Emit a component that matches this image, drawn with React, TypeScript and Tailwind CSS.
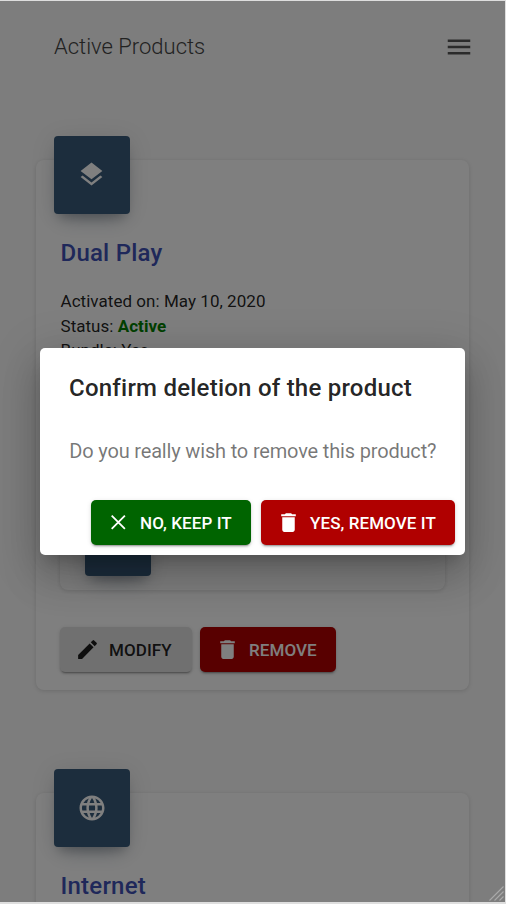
import type { ReactNode } from "react";
import { MdMenu, MdLayers, MdLanguage, MdDelete, MdEdit } from "react-icons/md";

const buttonShadow =
  "shadow-[0_3px_1px_-2px_rgba(0,0,0,0.2),0_2px_2px_0_rgba(0,0,0,0.14),0_1px_5px_0_rgba(0,0,0,0.12)]";

function CrossIcon() {
  return (
    <svg width="25" height="25" viewBox="0 0 25 25" fill="none" stroke="currentColor" strokeWidth="1.8">
      <path d="M5.7 5.7 18.9 18.9M18.9 5.7 5.7 18.9" />
    </svg>
  );
}

function ActionButton({
  icon,
  label,
  className,
  labelClassName = "pt-[2px]",
}: {
  icon: ReactNode;
  label: string;
  className: string;
  labelClassName?: string;
}) {
  return (
    <button
      className={`flex h-[45px] shrink-0 items-center gap-[9px] whitespace-nowrap rounded-[5px] pl-[15px] text-[17px] font-medium uppercase tracking-[0.08px] ${buttonShadow} ${className}`}
    >
      {icon}
      <span className={labelClassName}>{label}</span>
    </button>
  );
}

function IconTile({ children, className }: { children?: ReactNode; className: string }) {
  return (
    <div
      className={`flex items-center justify-center rounded-[4px] bg-[#385a7a] text-white shadow-[0_12px_20px_-10px_rgba(56,90,122,0.35),0_4px_25px_0_rgba(0,0,0,0.12),0_8px_10px_-5px_rgba(0,0,0,0.2)] ${className}`}
    >
      {children}
    </div>
  );
}

function ProductCard({ icon, title, children }: { icon: ReactNode; title: string; children?: ReactNode }) {
  return (
    <section className="h-[530px] w-[433px] rounded-[8px] bg-white px-[24px] shadow-[0_1px_4px_0_rgba(0,0,0,0.14)]">
      <IconTile className="-ml-[6px] -mt-[24px] h-[78px] w-[76px] pb-px pr-px">{icon}</IconTile>
      <h2 className="mt-[23px] pl-[0.5px] text-[24px] font-medium leading-[32px] tracking-[0.22px] text-[#3f51b5]">
        {title}
      </h2>
      {children}
    </section>
  );
}

function ConfirmDialog() {
  return (
    <div className="absolute inset-0 bg-black/50 pl-[40px] pt-[347px]">
      <div
        role="dialog"
        className="h-[207px] w-[425px] rounded-[5px] bg-white pr-[10px] pt-[24px] shadow-[0_11px_15px_-7px_rgba(0,0,0,0.2),0_24px_38px_3px_rgba(0,0,0,0.14),0_9px_46px_8px_rgba(0,0,0,0.12)]"
      >
        <h2 className="whitespace-nowrap pl-[29px] text-[24px] font-medium leading-[32px] tracking-[0.23px] text-black/87">
          Confirm deletion of the product
        </h2>
        <p className="mt-[32px] whitespace-nowrap pl-[29.3px] text-[20px] leading-[30px] tracking-[-0.17px] text-black/54">
          Do you really wish to remove this product?
        </p>
        <div className="mt-[34px] flex justify-end gap-[10px]">
          <ActionButton icon={<CrossIcon />} label="No, keep it" className="w-[160px] bg-[#006400] text-white" />
          <ActionButton icon={<MdDelete size={25} />} label="Yes, remove it" className="w-[194px] bg-[#b00000] text-white" />
        </div>
      </div>
    </div>
  );
}

export default function App() {
  return (
    <div className="h-[904px] w-[506px] overflow-hidden bg-[#dedede] pb-[2px] pr-px pt-px font-['Roboto',sans-serif]">
      <main className="relative h-[901px] overflow-hidden bg-[#fafafa] text-black/87">
        <header className="flex h-[90px] items-center justify-between pl-[54px] pr-[31px]">
          <h1 className="text-[22px] font-light text-[#444444]">Active Products</h1>
          <MdMenu size={30} className="mt-px text-black/65" />
        </header>

        <div className="flex flex-col gap-[103px] pl-[36px] pt-[69px]">
          <ProductCard icon={<MdLayers size={29} />} title="Dual Play">
            <div className="mt-[20px] pl-[0.5px] text-[17px] leading-[24.5px] tracking-[0.04px]">
              <p>Activated on: May 10, 2020</p>
              <p>
                Status: <span className="font-bold text-[#008000]">Active</span>
              </p>
              <p>Bundle: Yes</p>
            </div>
            <div className="mt-[66px] h-[161px] w-[385px] rounded-[8px] bg-white pl-[25px] shadow-[0_1px_4px_0_rgba(0,0,0,0.14)]">
              <div className="pt-[81px]">
                <IconTile className="h-[66px] w-[66px]" />
              </div>
            </div>
            <div className="mt-[37px] flex gap-[8px]">
              <ActionButton
                icon={<MdEdit size={25} />}
                label="Modify"
                className="w-[132px] bg-[#e0e0e0] text-black/87"
                labelClassName="pt-[3px]"
              />
              <ActionButton
                icon={<MdDelete size={25} />}
                label="Remove"
                className="w-[136px] bg-[#b00000] text-white"
                labelClassName="pt-[3px]"
              />
            </div>
          </ProductCard>
          <ProductCard icon={<MdLanguage size={30} />} title="Internet" />
        </div>

        <ConfirmDialog />
        <svg className="absolute bottom-px right-px h-[15px] w-[15px]" viewBox="0 0 15 15" stroke="#a8a8a8" strokeWidth="1.2">
          <path d="M0.5 14.5 14.5 0.5M5.5 14.5l9-9M10.5 14.5l4-4" />
        </svg>
      </main>
    </div>
  );
}
